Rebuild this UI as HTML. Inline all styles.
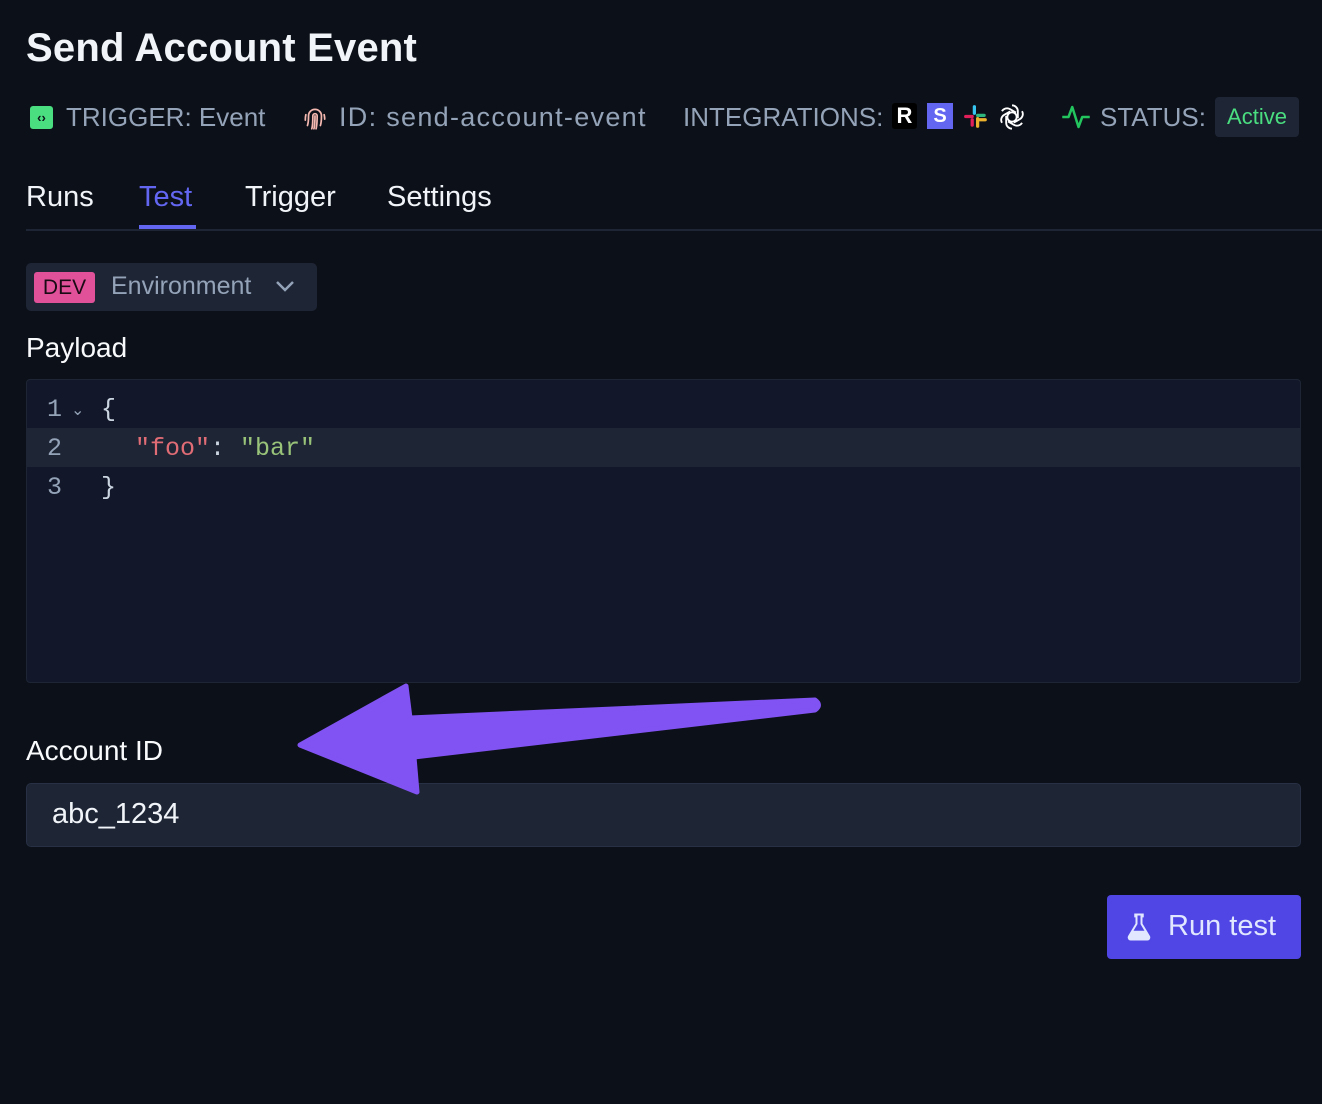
<!DOCTYPE html>
<html><head><meta charset="utf-8"><style>
body{margin:0;width:1322px;height:1104px;background:#0c1018;font-family:"Liberation Sans",sans-serif;color:#e5e7eb;position:relative;overflow:hidden}
.a{position:absolute}
.meta{color:#94a3b8;font-size:26px;top:102px;white-space:nowrap}
.mono{font-family:"Liberation Mono",monospace;font-size:25px}
</style></head><body>
<div class="a" style="left:26px;top:26px;font-size:40px;font-weight:bold;color:#f1f5f9;letter-spacing:0.2px">Send Account Event</div>

<div class="a" style="left:30px;top:106px;width:23px;height:23px;background:#4ade80;border-radius:3px;color:#0c1018;font-size:13px;text-align:center;line-height:23px;font-weight:bold">‹›</div>
<div class="a meta" style="left:66px">TRIGGER: Event</div>
<svg class="a" style="left:302px;top:104px" width="26" height="28" viewBox="0 0 24 26" fill="none" stroke="#f4b8b0" stroke-width="1.6" stroke-linecap="round"><path d="M5 20c1-3 1-6 1-9a6 6 0 0112 0c0 3 0 6-1 9"/><path d="M9 23c1-3 1-8 1-12a2 2 0 014 0c0 4 0 8-1 12"/><path d="M3 15c0-2 0-3 .5-5M21 14c0-1 0-2-.5-4M12 11c0 5 0 8-1 12"/></svg>
<div class="a meta" style="left:339px;font-size:27px;letter-spacing:1.3px">ID: send-account-event</div>
<div class="a meta" style="left:683px">INTEGRATIONS:</div>
<div class="a" style="left:892px;top:103px;width:25px;height:26px;background:#000;border-radius:3px;color:#fff;font-weight:bold;font-size:22px;text-align:center;line-height:26px">R</div>
<div class="a" style="left:927px;top:103px;width:26px;height:26px;background:#6366f1;color:#fff;font-weight:bold;font-size:20px;text-align:center;line-height:26px">S</div>
<svg class="a" style="left:963px;top:104px" width="26" height="26" viewBox="0 0 24 24"><rect x="9" y="1" width="3" height="9" rx="1.5" fill="#36c5f0"/><rect x="1" y="10" width="9" height="3" rx="1.5" fill="#e01e5a"/><rect x="12" y="9" width="9" height="3" rx="1.5" fill="#2eb67d"/><rect x="12" y="12" width="3" height="10" rx="1.5" fill="#ecb22e"/><rect x="14" y="13" width="8" height="3" rx="1.5" fill="#ecb22e"/><rect x="7" y="13" width="3" height="8" rx="1.5" fill="#e01e5a"/></svg>
<svg class="a" style="left:998px;top:103px" width="28" height="28" viewBox="0 0 24 24" fill="none" stroke="#fff" stroke-width="1.6"><circle cx="12" cy="12" r="4"/><path d="M12 2a5 5 0 015 5v6M20.6 7a5 5 0 01-1.8 6.8l-5.2 3M20.6 17a5 5 0 01-6.8 1.8l-5.2-3M12 22a5 5 0 01-5-5v-6M3.4 17a5 5 0 011.8-6.8l5.2-3M3.4 7a5 5 0 016.8-1.8l5.2 3"/></svg>
<svg class="a" style="left:1060px;top:102px" width="32" height="30" viewBox="0 0 24 24" fill="none" stroke="#22c55e" stroke-width="2" stroke-linejoin="round"><path d="M1 12h5l3-8 5 16 3-8h6"/></svg>
<div class="a meta" style="left:1100px">STATUS:</div>
<div class="a" style="left:1215px;top:97px;width:84px;height:40px;background:#1e2535;border-radius:4px;color:#4ade80;font-size:22px;line-height:40px;text-align:center">Active</div>

<div class="a" style="left:26px;top:181px;font-size:29px;color:#f1f5f9">Runs</div>
<div class="a" style="left:139px;top:181px;font-size:29px;color:#6366f1">Test</div>
<div class="a" style="left:139px;top:225px;width:57px;height:4px;background:#6366f1"></div>
<div class="a" style="left:245px;top:181px;font-size:29px;color:#f1f5f9">Trigger</div>
<div class="a" style="left:387px;top:181px;font-size:29px;color:#f1f5f9">Settings</div>
<div class="a" style="left:26px;top:229px;width:1296px;height:2px;background:#1e2535"></div>

<div class="a" style="left:26px;top:263px;width:291px;height:48px;background:#1e2535;border-radius:5px"></div>
<div class="a" style="left:34px;top:272px;width:61px;height:31px;background:#e0519a;border-radius:3px;color:#1a0a14;font-size:21px;line-height:31px;text-align:center">DEV</div>
<div class="a" style="left:111px;top:272px;font-size:25px;color:#94a3b8">Environment</div>
<svg class="a" style="left:274px;top:278px" width="22" height="16" viewBox="0 0 22 16" fill="none" stroke="#94a3b8" stroke-width="2.5"><path d="M3 4l8 8 8-8"/></svg>

<div class="a" style="left:26px;top:332px;font-size:28px;color:#f8fafc">Payload</div>
<div class="a" style="left:26px;top:379px;width:1273px;height:302px;background:#121829;border:1px solid #1e2535;border-radius:4px"></div>
<div class="a" style="left:27px;top:428px;width:1273px;height:39px;background:#1e2535"></div>
<div class="a mono" style="left:47px;top:395px;color:#94a3b8">1</div>
<div class="a" style="left:71px;top:400px;color:#94a3b8;font-size:16px">⌄</div>
<div class="a mono" style="left:101px;top:395px;color:#cbd5e1">{</div>
<div class="a mono" style="left:47px;top:434px;color:#94a3b8">2</div>
<div class="a mono" style="left:135px;top:434px;white-space:pre"><span style="color:#e06c75">"foo"</span><span style="color:#cbd5e1">: </span><span style="color:#98c379">"bar"</span></div>
<div class="a mono" style="left:47px;top:473px;color:#94a3b8">3</div>
<div class="a mono" style="left:101px;top:473px;color:#cbd5e1">}</div>

<div class="a" style="left:26px;top:735px;font-size:28px;color:#f8fafc">Account ID</div>
<div class="a" style="left:26px;top:783px;width:1273px;height:62px;background:#1e2535;border:1px solid #273044;border-radius:5px"></div>
<div class="a" style="left:52px;top:798px;font-size:29px;color:#f1f5f9">abc_1234</div>

<svg class="a" style="left:0;top:0" width="1322" height="1104"><path d="M300 745 L406 686 L410 718 L815 700 Q822 705 815 710 L414 757 L417 792 Z" fill="#8153f2" stroke="#8153f2" stroke-width="5" stroke-linejoin="round"/></svg>

<div class="a" style="left:1107px;top:895px;width:194px;height:64px;background:#4f46e5;border-radius:4px"></div>
<svg class="a" style="left:1124px;top:912px" width="30" height="30" viewBox="0 0 24 24"><path d="M9 2h6v1.5h-1v6l6 10c.6 1-.1 2.5-1.3 2.5H5.3c-1.2 0-1.9-1.5-1.3-2.5l6-10v-6H9z" fill="none" stroke="#e0e7ff" stroke-width="1.6"/><path d="M6.5 15h11l2.5 4.5c.5 1 0 2-1 2H5c-1 0-1.5-1-1-2z" fill="#e0e7ff"/></svg>
<div class="a" style="left:1168px;top:910px;font-size:29px;color:#e0e7ff">Run test</div>
</body></html>
